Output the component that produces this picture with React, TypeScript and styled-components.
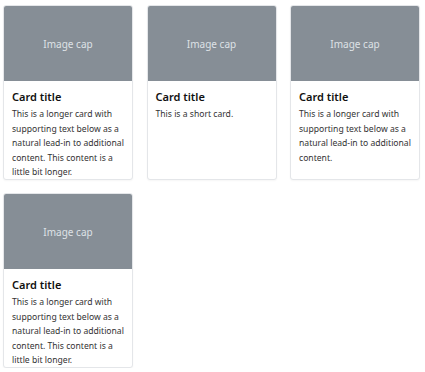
import React from 'react';
import styled, { createGlobalStyle } from 'styled-components';

const GlobalStyle = createGlobalStyle`
  body {
    margin: 0;
    background: #ffffff;
    font-family: 'Noto Sans', 'Open Sans', sans-serif;
    color: #212529;
  }
`;

const cards = [
  {
    title: 'Card title',
    text: 'This is a longer card with supporting text below as a natural lead-in to additional content. This content is a little bit longer.',
  },
  { title: 'Card title', text: 'This is a short card.' },
  {
    title: 'Card title',
    text: 'This is a longer card with supporting text below as a natural lead-in to additional content.',
  },
  {
    title: 'Card title',
    text: 'This is a longer card with supporting text below as a natural lead-in to additional content. This content is a little bit longer.',
  },
];

export default function App() {
  return (
    <>
      <GlobalStyle />
      <Grid>
        {cards.map((card, i) => (
          <Card key={i}>
            <ImageCap>Image cap</ImageCap>
            <Body>
              <Title>{card.title}</Title>
              <Text>{card.text}</Text>
            </Body>
          </Card>
        ))}
      </Grid>
    </>
  );
}

const Grid = styled.div`
  display: grid;
  grid-template-columns: repeat(3, 130px);
  column-gap: 13.5px;
  row-gap: 13px;
  padding: 5px 6px 0 3px;
`;

const Card = styled.div`
  display: flex;
  flex-direction: column;
  height: 175px;
  border: 1px solid #e4e6e9;
  border-radius: 3px;
  background: #fff;
  box-shadow: 0 1px 2px rgba(0, 0, 0, 0.04);
  overflow: hidden;
  box-sizing: border-box;
`;

const ImageCap = styled.div`
  height: 75px;
  flex-shrink: 0;
  background: #868e96;
  color: #dee2e6;
  font-size: 10px;
  display: flex;
  align-items: center;
  justify-content: center;
`;

const Body = styled.div`
  padding: 9px 8px 8px 8px;
`;

const Title = styled.div`
  font-size: 11px;
  font-weight: 600;
  color: #111;
  line-height: 14px;
  margin-bottom: 3px;
`;

const Text = styled.p`
  margin: 0;
  font-size: 8.6px;
  line-height: 14.5px;
  color: #333;
`;
